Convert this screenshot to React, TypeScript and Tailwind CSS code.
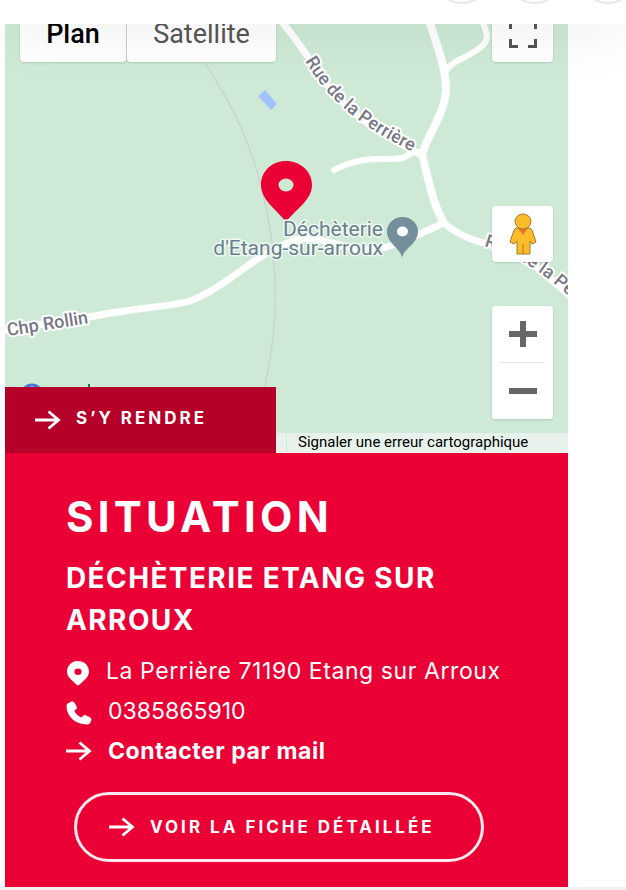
import type { ReactNode } from "react";

function Arrow({ className = "" }: { className?: string }) {
  return (
    <svg viewBox="0 0 26 20" className={"h-5 w-[26px] shrink-0 " + className} fill="none" stroke="currentColor" strokeWidth="2.800" aria-hidden="true">
      <path d="M0 10H23M13.500 1.500L23.500 10L13.500 18.500" />
    </svg>
  );
}

function PinIcon() {
  return (
    <svg viewBox="0 0 24 26" className="mt-1 h-[26px] w-6" fill="currentColor" aria-hidden="true">
      <path fillRule="evenodd" d="M12 1C5.700 1 1 5.700 1 11.500C1 15.500 3.200 18 6 20.500L11 25Q12 25.800 13 25L18 20.500C20.800 18 23 15.500 23 11.500C23 5.700 18.300 1 12 1ZM12 8.500A3.600 3.200 0 1 1 12 14.900A3.600 3.200 0 1 1 12 8.500Z" />
    </svg>
  );
}

function PhoneIcon() {
  return (
    <svg viewBox="0 0 26 24" className="mt-1 h-6 w-[26px]" fill="currentColor" aria-hidden="true">
      <path d="M5 .8C6.500 .3 8 .8 8.800 2.200L10.600 5.300C11.300 6.500 11 7.700 10 8.500L8.300 9.800C9.700 13 12.200 15.200 15.500 16.500L17 14.900C17.800 14 19 13.900 20.200 14.500L23.800 16.300C25.300 17 25.800 18.500 25.100 20L24.400 21.400C23.700 22.800 22.500 23.500 20.800 23.500C9.500 23.400 .7 15.800 .5 5.300C.5 3.700 1.200 2.500 2.500 1.900Z" />
    </svg>
  );
}

function MapDrawing() {
  return (
    <svg viewBox="5 24 563 429" preserveAspectRatio="xMidYMid slice" className="absolute inset-0 h-full w-full" aria-label="Carte" role="img">
      <rect x="5" y="24" width="563" height="429" fill="#cee9d6" />
      <path d="M202 58C232 105 250 140 262 190C277 250 280 310 268 370L262 400" fill="none" stroke="#cbd5d0" strokeWidth="1.500" />
      <path d="M258 96L265 90L277 104L271 110Z" fill="#a0c3ff" />
      <g fill="none" stroke="#ffffff" strokeLinecap="round" strokeLinejoin="round">
        <path strokeWidth="7" d="M280 20C305 48 314 70 335 94C365 127 390 137 421 155" />
        <path strokeWidth="8" d="M429 20C438 50 446 66 446 91C444 115 430 130 422 154C428 177 432 203 444 223" />
        <path strokeWidth="6" d="M482 20C487 33 489 38 484 44C472 58 449 59 445 74" />
        <path strokeWidth="6" d="M334 170C366 154 384 161 403 158L412 153" />
        <path strokeWidth="7" d="M5 330L95 316C130 308 170 307 190 301C230 285 255 254 290 242C315 231 340 250 370 250C398 247 420 233 444 223" />
        <path strokeWidth="7" d="M444 223C462 239 484 243 500 247L535 266L580 304" />
      </g>
      <path id="perriere-nord" d="M305 61C326 96 354 126 430 160" fill="none" />
      <path id="perriere-sud" d="M484 246C515 255 542 270 582 308" fill="none" />
      <g fontFamily="Roboto, sans-serif" fontSize="18" fontWeight="500" fill="#777785" stroke="#ffffff" strokeWidth="4" strokeLinejoin="round" paintOrder="stroke">
        <text><textPath href="#perriere-nord">Rue de la Perrière</textPath></text>
        <text><textPath href="#perriere-sud">Rue de la Pe…</textPath></text>
        <text transform="translate(8 336) rotate(-9)">Chp Rollin</text>
      </g>
      <path d="M286 222C277 210 261 200 261 185C261 171 272 161 286 161S312 171 312 185C312 200 295 210 286 222Z" fill="#eb0035" />
      <ellipse cx="286" cy="185" rx="7.500" ry="6.500" fill="#cee9d6" />
      <g fontFamily="Roboto, sans-serif" fontSize="21" fill="#68808c" textAnchor="end" stroke="#eef8f1" strokeWidth="3" strokeLinejoin="round" paintOrder="stroke">
        <text x="383" y="236">Déchèterie</text>
        <text x="383" y="255">d'Etang-sur-arroux</text>
      </g>
      <path d="M402 258C401 248 387 244 387 231.500A15.500 14.500 0 0 1 418 231.500C418 244 404 248 402 258Z" fill="#748e9b" />
      <ellipse cx="402.500" cy="231.500" rx="5.500" ry="5" fill="#ffffff" />
      <circle cx="32" cy="395" r="10" fill="none" stroke="#4775dc" strokeWidth="3" />
      <path d="M89 384V390" stroke="#257a3c" strokeWidth="2" />
    </svg>
  );
}

function MapButton({ label, className, children }: { label: string; className: string; children: ReactNode }) {
  return (
    <button type="button" aria-label={label} className={"flex w-[61px] items-center justify-center bg-white " + className}>
      {children}
    </button>
  );
}

function Map() {
  return (
    <section className="relative h-[429px] overflow-hidden">
      <MapDrawing />
      <div className="absolute -top-[18px] left-[15px] flex gap-px font-[Roboto,sans-serif] text-[27px] leading-8">
        <button type="button" className="h-14 w-[106px] rounded bg-white font-medium text-black shadow">Plan</button>
        <button type="button" className="h-14 w-[149px] rounded bg-white text-[#565656] shadow">Satellite</button>
      </div>
      <div className="absolute -top-[18px] right-[15px] flex flex-col">
        <MapButton label="Plein écran" className="h-14 rounded shadow">
          <svg viewBox="0 0 28 28" className="size-7" fill="none" stroke="#555" strokeWidth="3" aria-hidden="true">
            <path d="M1.500 9V1.500H9M19 1.500H26.500V9M26.500 19V26.500H19M9 26.500H1.500V19" />
          </svg>
        </MapButton>
        <MapButton label="Street View" className="mt-36 h-14 rounded shadow">
          <svg viewBox="0 0 28 42" className="h-[42px] w-7" fill="#fbbc2c" stroke="#a8792f" strokeWidth="1" strokeLinejoin="round" aria-hidden="true">
            <path d="M7 15H21L23 17L27 29L23 31L21 28V41H8V28L5 31L1 29L5 17Z" />
            <path d="M14 31V41" />
            <path d="M9 15H19L14 22Z" fill="#e8752a" stroke="none" />
            <ellipse cx="14" cy="8.500" rx="8" ry="7.500" />
          </svg>
        </MapButton>
        <div className="mt-11 flex flex-col rounded bg-white shadow">
          <MapButton label="Zoom avant" className="h-14 rounded-t">
            <svg viewBox="0 0 28 26" className="h-[26px] w-7" stroke="#666" strokeWidth="6" aria-hidden="true"><path d="M0 13H28M14 0V26" /></svg>
          </MapButton>
          <div className="mx-2 h-px bg-[#e6e6e6]" />
          <MapButton label="Zoom arrière" className="h-14 rounded-b">
            <svg viewBox="0 0 28 6" className="h-[6px] w-7" aria-hidden="true"><path d="M0 0H28V6H0Z" fill="#666" /></svg>
          </MapButton>
        </div>
      </div>
      <div className="absolute right-0 bottom-0 flex h-5 w-[292px] bg-[#e8f2ec] pl-[10px]">
        <a href="#erreur" className="border-l border-[#d3e8da] pl-[11px] font-[Roboto,sans-serif] text-[15px] leading-[18px] whitespace-nowrap text-black">
          Signaler une erreur cartographique
        </a>
      </div>
      <a href="#itineraire" className="absolute bottom-0 left-0 flex h-[66px] w-[271px] items-center gap-[15px] bg-[#b50029] pl-[30px] text-[17px] leading-6 font-bold tracking-[3px] text-white">
        <Arrow />
        <span className="pb-1">S’Y RENDRE</span>
      </a>
    </section>
  );
}

export default function App() {
  return (
    <div className="min-h-screen bg-white font-[Inter,sans-serif]">
      <header className="relative z-10 bg-white shadow-[0_0_60px_rgba(0,0,0,0.12)]">
        <div className="flex h-6 items-end justify-end gap-[17px] overflow-hidden pb-5">
          <span className="size-14 shrink-0 rounded-full border-2 border-[#e8e8e8]" />
          <span className="size-14 shrink-0 rounded-full border-2 border-[#e8e8e8]" />
          <span className="-mr-[10px] size-14 shrink-0 rounded-full border-2 border-[#e8e8e8]" />
        </div>
      </header>
      <main className="mr-[58px] ml-[5px]">
        <Map />
        <section className="bg-[#eb0035] px-[61px] pt-10 pb-[25px] text-white">
          <h2 className="text-[42px] leading-[48px] font-bold tracking-widest">SITUATION</h2>
          <h3 className="mt-4 text-[28px] leading-[42px] font-bold tracking-wider">DÉCHÈTERIE ETANG SUR ARROUX</h3>
          <ul className="mt-[10px] text-[23px] leading-10 whitespace-nowrap">
            <li className="flex items-center gap-4 tracking-wide"><PinIcon />La Perrière 71190 Etang sur Arroux</li>
            <li className="flex items-center gap-4"><PhoneIcon />0385865910</li>
            <li><a href="#contact" className="flex items-center gap-4 font-bold tracking-wide"><Arrow />Contacter par mail</a></li>
          </ul>
          <a href="#fiche" className="mt-[21px] ml-2 flex h-[70px] w-[410px] items-center gap-[15px] rounded-full border-[3px] border-[#ffe9ef] pl-8 text-[17px] leading-6 font-bold tracking-[3px] whitespace-nowrap">
            <Arrow />
            VOIR LA FICHE DÉTAILLÉE
          </a>
        </section>
      </main>
      <div className="h-1 bg-[#f0f0f0]" />
    </div>
  );
}
